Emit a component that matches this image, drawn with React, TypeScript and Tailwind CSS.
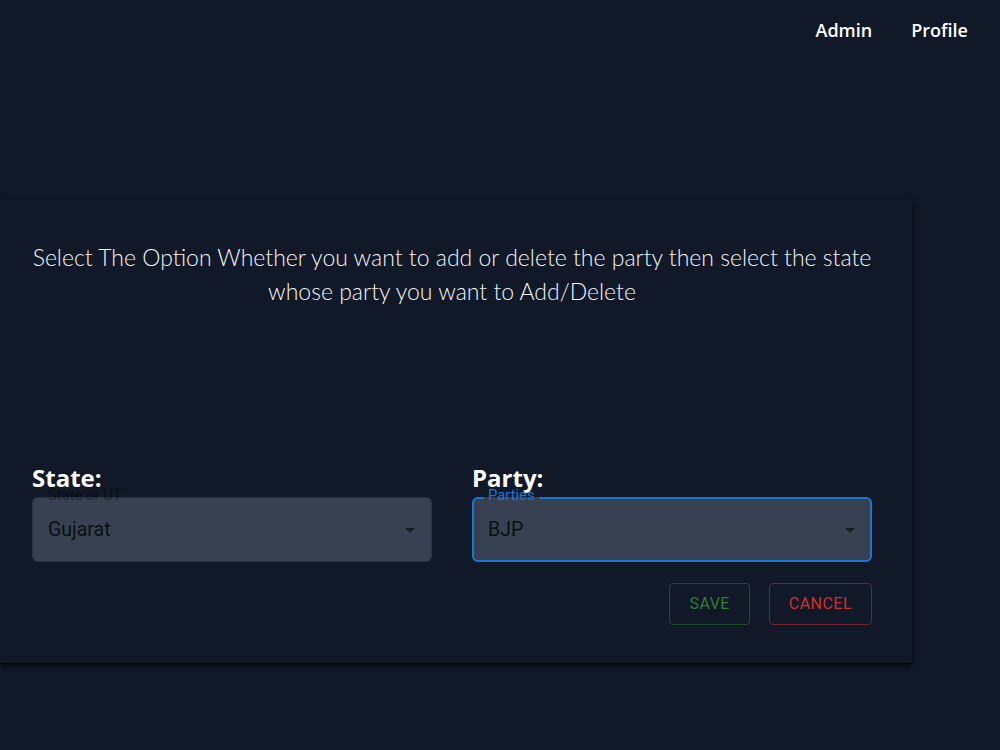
import React from 'react'

function Caret() {
  return (
    <svg width="24" height="24" viewBox="0 0 24 24" className="absolute right-[10px] top-1/2 -translate-y-1/2 fill-black/55">
      <path d="M7 10l5 5 5-5z" />
    </svg>
  )
}

function SelectBox({ label, value, focused }: { label: string; value: string; focused?: boolean }) {
  return (
    <div className="relative h-[65px] rounded-[6px] bg-[#374151] font-['Roboto',sans-serif]">
      {/* outline with notch */}
      <fieldset
        className={`absolute inset-0 -top-[5px] m-0 rounded-[6px] px-[10px] ${
          focused ? 'border-2 border-[#1976d2]' : 'border border-black/20'
        }`}
      >
        <legend
          className={`h-[11px] p-0 text-[14.8px] leading-none ${focused ? 'px-[4px] invisible' : 'w-0 invisible max-w-[0.01px]'}`}
        >
          {label}
        </legend>
      </fieldset>
      <label
        className={`absolute left-[16px] -top-[10px] text-[14.8px] leading-4 ${
          focused ? 'text-[#1976d2]' : 'text-black/45'
        }`}
      >
        {label}
      </label>
      <div className="flex h-full items-center px-[16px] text-[19.5px] text-black/80">{value}</div>
      <Caret />
    </div>
  )
}

export default function App() {
  return (
    <div className="min-h-[750px] bg-[#111827] font-['Open_Sans',sans-serif] text-white">
      {/* Top nav */}
      <div className="flex justify-end gap-[39px] px-[32px] pt-[17px] text-[18px] font-semibold">
        <span>Admin</span>
        <span>Profile</span>
      </div>

      {/* Card */}
      <div className="mt-[156px] w-[912px] bg-[#111827] pl-[32px] pr-[40px] pt-[40px] pb-[38px] shadow-[0_3px_3px_-2px_rgba(0,0,0,0.5),0_3px_4px_0_rgba(0,0,0,0.35),0_1px_8px_0_rgba(0,0,0,0.3)]">
        <p className="text-center font-['Lato',sans-serif] text-[23px] font-light leading-[34px] text-gray-100">
          Select The Option Whether you want to add or delete the party then select the state whose party you want to Add/Delete
        </p>

        <div className="mt-[154px] grid grid-cols-2 gap-[40px]">
          <div>
            <h2 className="mb-[3px] text-[24px] font-bold leading-[32px]">State:</h2>
            <SelectBox label="State or UT" value="Gujarat" />
          </div>
          <div>
            <h2 className="mb-[3px] text-[24px] font-bold leading-[32px]">Party:</h2>
            <SelectBox label="Parties" value="BJP" focused />
          </div>
        </div>

        <div className="mt-[21px] flex justify-end gap-[19px] font-['Roboto',sans-serif]">
          <button className="h-[42px] rounded-[4px] border border-[#2e7d32]/50 px-[19px] text-[16px] font-normal tracking-[0.46px] text-[#2e7d32]">
            SAVE
          </button>
          <button className="h-[42px] rounded-[4px] border border-[#d32f2f]/50 px-[19px] text-[16px] font-normal tracking-[0.46px] text-[#d32f2f]">
            CANCEL
          </button>
        </div>
      </div>
    </div>
  )
}
